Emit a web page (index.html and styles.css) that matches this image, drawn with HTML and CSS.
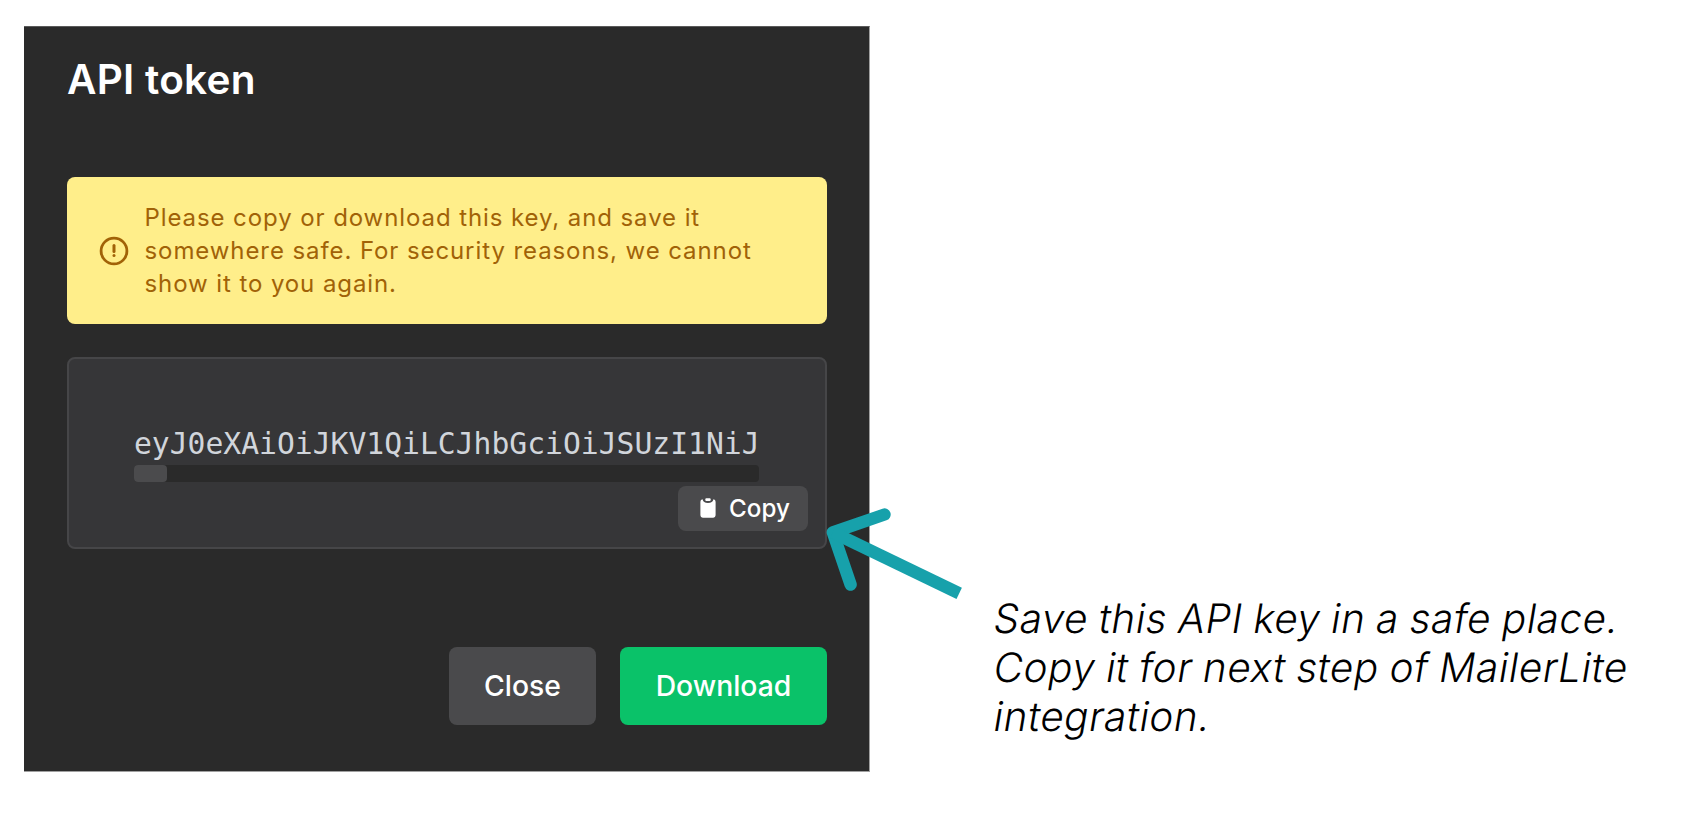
FILE: index.html
```
<!DOCTYPE html>
<html lang="en">
<head>
<meta charset="utf-8">
<title>API token</title>
<link rel="stylesheet" href="styles.css">
</head>
<body>
<main class="page">
  <section class="dialog">
    <h1 class="dialog-title">API token</h1>
    <div class="alert">
      <svg class="alert-icon" viewBox="0 0 30 30" fill="none" stroke="currentColor">
        <circle cx="15" cy="15" r="12.9" stroke-width="2.8"/>
        <path d="M15 9.4v6" stroke-width="3" stroke-linecap="round"/>
        <circle cx="15" cy="19.6" r="1.5" fill="currentColor" stroke="none"/>
      </svg>
      <p class="alert-text">Please copy or download this key, and save it<br>somewhere safe. For security reasons, we cannot<br>show it to you again.</p>
    </div>
    <div class="token">
      <code class="token-key">eyJ0eXAiOiJKV1QiLCJhbGciOiJSUzI1NiJ</code>
      <div class="scrollbar"><div class="scrollbar-thumb"></div></div>
      <button class="copy">
        <svg class="copy-icon" viewBox="0 0 16 20" fill="#fff">
          <path d="M2.6 1.3C3 4 4.8 5 8 5s5-1 5.400-3.700A2.400 2.400 0 0 1 15.600 3.700V17.300A2.400 2.400 0 0 1 13.200 19.700H2.800A2.400 2.400 0 0 1 .4 17.300V3.700A2.400 2.400 0 0 1 2.600 1.300z"/>
          <rect x="5.300" y="0.200" width="5.400" height="2.700" rx="1"/>
        </svg>
        <span>Copy</span>
      </button>
    </div>
    <div class="actions">
      <button class="btn btn-close">Close</button>
      <button class="btn btn-download">Download</button>
    </div>
  </section>
  <p class="note">
    <span class="note-line">Save this API key in a safe place.</span>
    <span class="note-line">Copy it for next step of MailerLite</span>
    <span class="note-line">integration.</span>
  </p>
  <svg class="arrow" viewBox="820 500 150 100" fill="none" stroke="#17a1ab" stroke-width="12.400">
    <path d="M884.500 514.500L832.800 532.300L850.600 584.600" stroke-linecap="round" stroke-linejoin="round"/>
    <path d="M832.800 532.300L959.200 593.300"/>
  </svg>
</main>
</body>
</html>
```
FILE: styles.css
```
* { box-sizing: border-box; }
body {
  margin: 0;
  background: #fff;
  font-family: Inter, "Liberation Sans", sans-serif;
}
.page {
  position: relative;
  display: flex;
  align-items: flex-start;
  width: 1686px;
  height: 816px;
  padding: 26px 0 0 24px;
  overflow: hidden;
}
.dialog {
  flex: none;
  display: flex;
  flex-direction: column;
  width: 846px;
  height: 746px;
  padding: 28px 42px 0 43px;
  background: #2a2a2a;
  border: 1px solid #a0a0a0;
  border-top-color: #5a5a5a;
  border-left: 0;
}
.dialog-title {
  margin: 0 0 72px;
  color: #fff;
  font-size: 40.5px;
  line-height: 50px;
  font-weight: 600;
  letter-spacing: 0.25px;
  white-space: nowrap;
}
.alert {
  display: flex;
  align-items: center;
  flex: none;
  gap: 15.5px;
  height: 147px;
  padding-left: 32px;
  border-radius: 8px;
  background: #ffee8a;
  color: #a16207;
}
.alert-icon { flex: none; width: 30px; height: 30px; }
.alert-text {
  margin: 0;
  padding-top: 2px;
  font-size: 24px;
  line-height: 32.700px;
  letter-spacing: 0.91px;
  white-space: nowrap;
}
.token {
  display: flex;
  flex-direction: column;
  flex: none;
  height: 192px;
  margin-top: 33px;
  padding: 66px 17px 0 65px;
  border: 2px solid #464648;
  border-radius: 8px;
  background: #363638;
}
.token-key {
  margin-bottom: 2px;
  color: #d1d5db;
  font-family: "DejaVu Sans Mono", monospace;
  font-size: 29.700px;
  line-height: 38px;
  white-space: nowrap;
}
.scrollbar {
  flex: none;
  width: 625px;
  height: 17px;
  border-radius: 4px;
  background: #2a2a2a;
}
.scrollbar-thumb {
  width: 33px;
  height: 17px;
  border-radius: 4px;
  background: #4b4b4d;
}
button {
  display: flex;
  align-items: center;
  justify-content: center;
  padding: 0;
  border: 0;
  border-radius: 8px;
  background: #4a4a4c;
  color: #fff;
  font-family: inherit;
  font-weight: 500;
}
.copy {
  align-self: flex-end;
  gap: 13px;
  width: 130px;
  height: 45px;
  margin-top: 4px;
  padding: 0 0 1px 4px;
  font-size: 24.2px;
}
.copy-icon { width: 16px; height: 20px; }
.actions {
  display: flex;
  justify-content: flex-end;
  gap: 24px;
  margin-top: 98px;
}
.btn { height: 78px; font-size: 28.3px; }
.btn-close { width: 147px; }
.btn-download { width: 207px; background: #0ac269; }
.note {
  margin: 567.5px 0 0 122px;
  color: #000;
  font-size: 40.500px;
  line-height: 49px;
  font-weight: 300;
  letter-spacing: 0.5px;
  word-spacing: -1.2px;
  white-space: nowrap;
}
/* Slanted roman letterforms */
.note-line {
  display: block;
  width: max-content;
  transform: skewX(-9.4deg);
  transform-origin: 0 78%;
}
/* Arrow overlaps the dialog edge and points at the Copy button */
.arrow {
  position: absolute;
  left: 820px;
  top: 500px;
  width: 150px;
  height: 100px;
}
```
